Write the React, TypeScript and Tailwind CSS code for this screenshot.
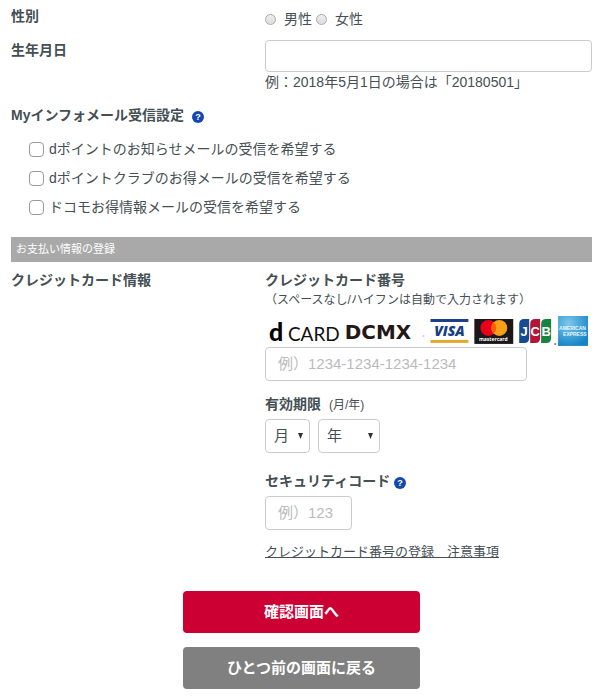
import type { ReactNode } from 'react';
import { useState } from 'react';

const mailOptions = [
  'dポイントのお知らせメールの受信を希望する',
  'dポイントクラブのお得メールの受信を希望する',
  'ドコモお得情報メールの受信を希望する',
];

const HelpIcon = () => (
  <svg width="12" height="12" viewBox="0 0 12 12" aria-hidden="true">
    <circle cx="6" cy="6" r="6" fill="#1448b0" />
    <text x="6" y="9" textAnchor="middle" fontSize="9" fontWeight="bold" fill="#fff">?</text>
  </svg>
);

const HelpButton = ({ label }: { label: string }) => (
  <button type="button" aria-label={label} className="mt-1">
    <HelpIcon />
  </button>
);

const CardLogos = () => (
  <svg viewBox="0 0 328 30" className="block w-full max-w-[328px] overflow-visible" role="img" aria-label="利用できるカード">
    {/* d CARD */}
    <text x="4" y="25" fontFamily="Lato" fontWeight="900" fontSize="25" fill="#000">d</text>
    <text x="23" y="25" fontFamily="Lato" fontSize="19" fill="#111">CARD</text>

    {/* DCMX */}
    <text x="80" y="23" fontFamily="DejaVu Sans" fontWeight="bold" fontSize="20" fill="#231815">DCMX</text>
    <circle cx="159" cy="20" r="1" fill="#ccc" />

    {/* VISA */}
    <rect x="166" y="3" width="38" height="24" fill="#fff" />
    <rect x="166" y="3" width="38" height="3" fill="#1a3f86" />
    <rect x="166" y="24" width="38" height="3" fill="#e5a82d" />
    <text x="185" y="20" textAnchor="middle" fontFamily="Open Sans" fontWeight="800" fontStyle="italic" fontSize="14" fill="#1a3f86">VISA</text>

    {/* mastercard */}
    <rect x="210" y="3" width="39" height="25" fill="#1c1718" />
    <circle cx="224" cy="12" r="8" fill="#e8001b" />
    <circle cx="235" cy="12" r="8" fill="#f6a01a" />
    <path d="M229.500 6.200A8 8 0 0 1 229.500 17.800A8 8 0 0 1 229.500 6.200Z" fill="#fc5f01" />
    <text x="229" y="25" textAnchor="middle" fontFamily="Open Sans" fontWeight="bold" fontSize="5" fill="#fff">mastercard</text>

    {/* JCB */}
    <path d="M260 3H265V22Q265 27 260 27H255V8Q255 3 260 3Z" fill="#164b92" />
    <path d="M271 3H276V22Q276 27 271 27H266V8Q266 3 271 3Z" fill="#b41435" />
    <path d="M282 3H287V22Q287 27 282 27H277V8Q277 3 282 3Z" fill="#168343" />
    <g fontFamily="Liberation Sans" fontWeight="bold" fontSize="13" fill="#fff" textAnchor="middle">
      <text x="260" y="20">J</text>
      <text x="271" y="20">C</text>
      <text x="282" y="20">B</text>
    </g>
    <circle cx="291" cy="28" r="1" fill="#4b7fb5" />

    {/* AMERICAN EXPRESS */}
    <defs>
      <radialGradient id="amex" cx="35%" cy="25%" r="80%">
        <stop offset="0" stopColor="#7cc8ec" />
        <stop offset="1" stopColor="#1583c5" />
      </radialGradient>
    </defs>
    <rect x="294" y="0" width="30" height="30" fill="url(#amex)" />
    <g fontFamily="Liberation Sans" fontWeight="bold" fontSize="5" fill="#e9f6fd">
      <text x="295" y="14">AMERICAN</text>
      <text x="299" y="20">EXPRESS</text>
    </g>
  </svg>
);

const Row = ({ title, children }: { title: string; children: ReactNode }) => (
  <div className="grid grid-cols-[254px_1fr]">
    <h2 className="font-bold">{title}</h2>
    <div>{children}</div>
  </div>
);

const field = 'h-[34px] rounded border border-[#ccc] bg-white text-[15px] placeholder:text-[#bbb]';

const CardSelect = ({ label, unit, className }: { label: string; unit: string; className: string }) => (
  <div className={`relative ${className}`}>
    <select aria-label={label} className={`${field} w-full appearance-none pl-2`}>
      <option>{unit}</option>
    </select>
    <svg className="pointer-events-none absolute top-[14px] right-[7px]" width="5" height="6" viewBox="0 0 5 6">
      <path d="M0 0H5L2.500 6Z" fill="#333" />
    </svg>
  </div>
);

const App = () => {
  const [checked, setChecked] = useState<string[]>([]);

  const toggle = (option: string) => {
    setChecked(checked.includes(option) ? checked.filter((o) => o !== option) : [...checked, option]);
  };

  return (
    <form className="bg-white pt-[6px] pr-2 pb-[7px] pl-[11px] font-['Liberation_Sans','Noto_Sans_CJK_JP',sans-serif] text-[14px] leading-[20px] text-[#454f54]">
      <Row title="性別">
        <div className="flex gap-1 pt-[3px]">
          {['男性', '女性'].map((sex) => (
            <label key={sex} className="flex items-center gap-2">
              <input
                type="radio"
                name="sex"
                value={sex}
                className="size-[11px] appearance-none rounded-full border border-[#aaa] bg-linear-to-b from-[#eee] to-[#ddd] checked:border-4 checked:border-[#555]"
              />
              {sex}
            </label>
          ))}
        </div>
      </Row>

      <div className="mt-[11px]">
        <Row title="生年月日">
          <input aria-label="生年月日" type="text" className="block h-[32px] w-full rounded border border-[#ccc] px-3 text-[15px]" />
          <p>例：2018年5月1日の場合は「20180501」</p>
        </Row>
      </div>

      <div className="mt-[13px] flex items-center gap-2">
        <h2 className="font-bold">Myインフォメール受信設定</h2>
        <HelpButton label="受信設定について" />
      </div>
      <div className="mt-[14px] flex flex-col gap-[9px] pl-[18px]">
        {mailOptions.map((option) => (
          <label key={option} className="flex items-center gap-[5px]">
            <input
              type="checkbox"
              checked={checked.includes(option)}
              onChange={() => toggle(option)}
              className="size-[15px] appearance-none rounded-[4px] border border-[#999] bg-white checked:bg-[#1448b0]"
            />
            {option}
          </label>
        ))}
      </div>

      <h2 className="mt-5 bg-[#a9a9a9] px-[5px] text-[11px] leading-[25px] text-white">お支払い情報の登録</h2>

      <div className="mt-2">
        <Row title="クレジットカード情報">
          <label htmlFor="card-number" className="block font-bold">クレジットカード番号</label>
          <p className="text-[12px]">（スペースなし/ハイフンは自動で入力されます）</p>
          <div className="mt-[6px]">
            <CardLogos />
          </div>
          <input id="card-number" type="text" placeholder="例）1234-1234-1234-1234" className={`${field} mt-px block w-full max-w-[262px] px-3`} />

          <p className="mt-[13px] font-bold">
            有効期限<span className="ml-2 text-[12px] font-normal">(月/年)</span>
          </p>
          <div className="mt-1 flex gap-2">
            <CardSelect label="月" unit="月" className="w-[45px]" />
            <CardSelect label="年" unit="年" className="w-[62px]" />
          </div>

          <div className="mt-[18px] flex items-center gap-1">
            <label htmlFor="security-code" className="font-bold">セキュリティコード</label>
            <HelpButton label="セキュリティコードについて" />
          </div>
          <input id="security-code" type="text" placeholder="例）123" className={`${field} mt-[5px] block w-[87px] px-3`} />

          <p className="mt-3 text-[13px]">
            <a href="#notes" className="underline">クレジットカード番号の登録　注意事項</a>
          </p>
        </Row>
      </div>

      <div className="mx-auto mt-[29px] flex w-[237px] flex-col gap-[14px] text-[15px] font-bold text-white">
        <button type="submit" className="h-[42px] rounded bg-[#cc0033]">確認画面へ</button>
        <button type="button" className="h-[42px] rounded bg-[#808080]">ひとつ前の画面に戻る</button>
      </div>
    </form>
  );
};

export default App;
